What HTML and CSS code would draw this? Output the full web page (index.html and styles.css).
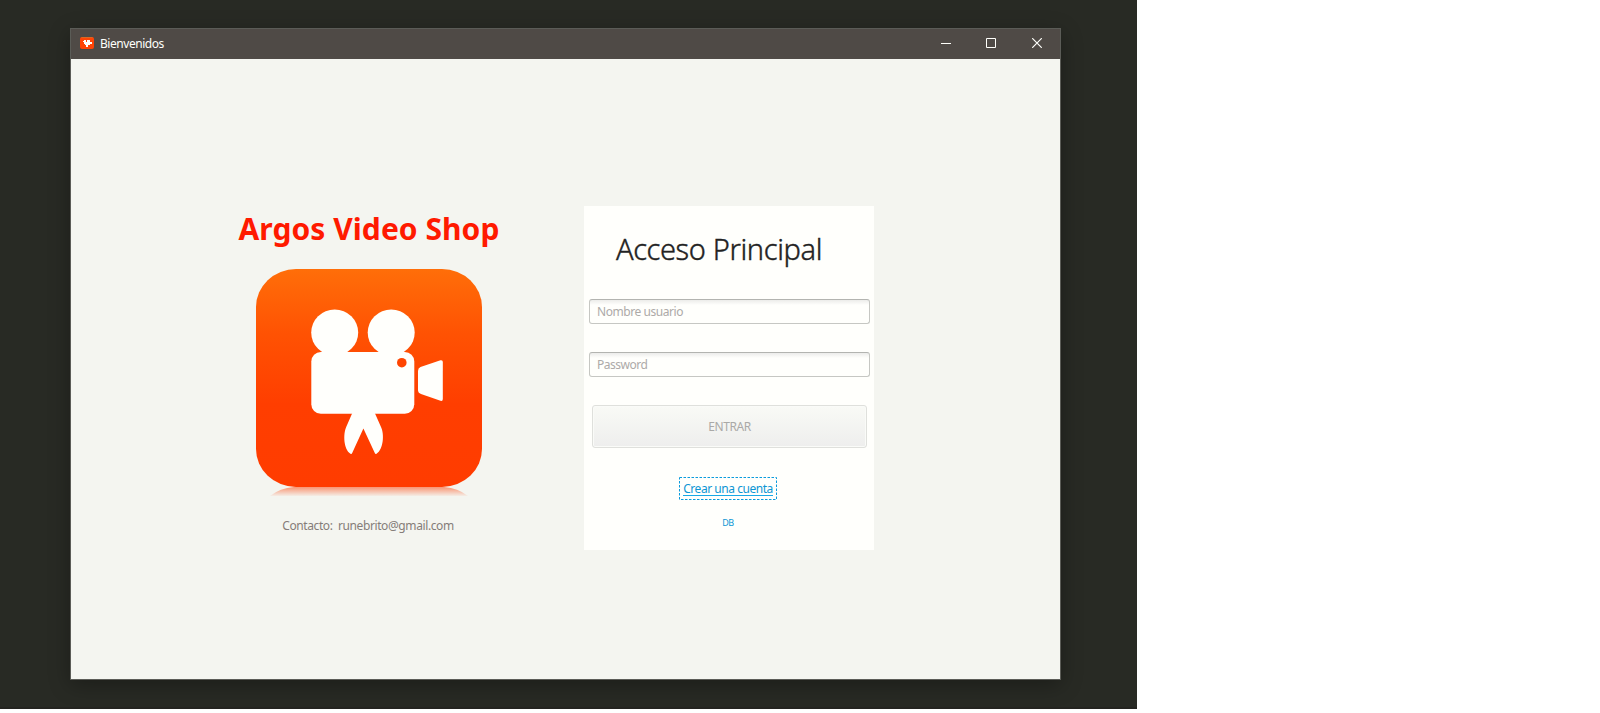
FILE: index.html
```html
<!DOCTYPE html>
<html lang="es">
<head>
<meta charset="utf-8">
<title>Bienvenidos</title>
<link rel="stylesheet" href="styles.css">
</head>
<body>
<div class="desktop">
  <div class="window">
    <header class="titlebar">
      <svg class="app-icon" width="14" height="12" viewBox="0 0 14 12">
        <rect width="14" height="12" rx="2" fill="#ff4406"/>
        <path d="M1.5 .5h11" stroke="#d96822"/>
        <path d="M4 3h2v2h1V3h3v2h2v2h-2v1H8v2H6V8H5V7H4V5H3V4h1z" fill="#fff"/>
      </svg>
      <span class="window-title">Bienvenidos</span>
      <div class="controls">
        <svg width="10" height="10"><path d="M0 5.500h10" stroke="#fffffb"/></svg>
        <svg width="10" height="10"><path d="M.5 .5h9v9h-9z" fill="none" stroke="#fffffb"/></svg>
        <svg class="close" width="10" height="10"><path d="M.2 .2l9.600 9.600M9.800 .2L.2 9.800" stroke="#fffffb" stroke-width="1.2"/></svg>
      </div>
    </header>
    <main class="content">
      <section class="brand">
        <h1 class="brand-title">Argos Video Shop</h1>
        <svg class="logo" width="226" height="228" viewBox="256 269 226 228">
          <defs>
            <linearGradient id="face" x1="0" y1="0" x2="0" y2="1">
              <stop offset="0" stop-color="#ff6e09"/>
              <stop offset=".3" stop-color="#ff5203"/>
              <stop offset=".62" stop-color="#ff3e00"/>
              <stop offset="1" stop-color="#ff3c00"/>
            </linearGradient>
            <linearGradient id="mirror" gradientUnits="userSpaceOnUse" x1="0" y1="487" x2="0" y2="496">
              <stop offset="0" stop-color="#ff3c00" stop-opacity=".52"/>
              <stop offset="1" stop-color="#ff3c00" stop-opacity=".04"/>
            </linearGradient>
          </defs>
          <path d="M294 487H444Q458 488 468 496H270Q280 488 294 487z" fill="url(#mirror)"/>
          <rect x="256" y="269" width="226" height="218" rx="40" ry="38" fill="url(#face)"/>
          <g fill="#fffffc">
            <ellipse cx="334.7" cy="332.6" rx="23.5" ry="23"/>
            <ellipse cx="391.2" cy="332.6" rx="23.5" ry="23"/>
            <rect x="311.3" y="352" width="103" height="61.7" rx="9.5"/>
            <path d="M420.5 367L440.5 360.3Q442.8 359.8 442.8 362V399Q442.8 401.5 440.5 400.8L421 394Q418 392.8 418 390V371Q418 368 420.5 367z"/>
            <path d="M352.3 413L346.2 427C343 434 343.5 449.500 350.500 453.700Q351.600 454.300 352.200 453L363.400 428.500L374.800 453Q375.400 454.300 376.500 453.700C383.500 449.500 384.500 434 381 427L374.800 413z"/>
          </g>
          <circle cx="401.8" cy="362.7" r="4.8" fill="#ff4500"/>
        </svg>
        <p class="contact">Contacto:&nbsp; runebrito@gmail.com</p>
      </section>
      <form class="card">
        <h2 class="card-title">Acceso Principal</h2>
        <input class="field" type="text" placeholder="Nombre usuario">
        <input class="field" type="password" placeholder="Password">
        <button class="submit" type="button" disabled>ENTRAR</button>
        <a class="link-box">
          <svg class="focus-ring" width="98" height="23"><rect x=".5" y=".5" width="97" height="22"/></svg>
          <span class="link-text">Crear una cuenta</span>
        </a>
        <a class="db">DB</a>
      </form>
    </main>
  </div>
</div>
</body>
</html>
```

FILE: styles.css
```css
* { box-sizing: border-box; }
body {
  margin: 0;
  background: #fff;
  font-family: "Noto Sans", "Open Sans", sans-serif;
  font-size: 12px;
}
h1, h2, p { margin: 0; font-weight: 400; }
.desktop {
  width: 1137px;
  height: 709px;
  padding: 28px 0 0 70px;
  background: #282a24;
  border-bottom: 2px solid #242420;
  overflow: hidden;
}
.window {
  width: 991px;
  height: 652px;
  border: 1px solid #5b5c57;
  background: #f4f5f0;
  box-shadow: 0 5px 20px rgba(0, 0, 0, .3);
}
.titlebar {
  display: flex;
  align-items: center;
  height: 30px;
  padding: 0 18px 0 9px;
  background: #4f4a46;
  color: #fffffb;
}
.app-icon { margin: -2px 6px 0 0; }
.window-title { font-size: 12px; line-height: 16px; letter-spacing: -.45px; }
.controls { display: flex; gap: 35px; margin: -2px 0 0 auto; }
.controls svg { display: block; }
.controls .close { margin-left: 1px; }
.content { display: flex; gap: 80px; padding: 147px 0 0 163px; }
.brand { display: flex; flex-direction: column; align-items: center; width: 270px; }
.brand-title {
  height: 63px;
  font-size: 30px;
  line-height: 46px;
  font-weight: 700;
  letter-spacing: .05px;
  color: #ff1a00;
  white-space: nowrap;
}
.logo { display: block; flex: none; }
.contact { margin: 20px 2px 0 0; line-height: 18px; font-size: 12px; letter-spacing: -.4px; color: #857d79; white-space: nowrap; }
.card {
  display: flex;
  flex-direction: column;
  align-items: center;
  width: 290px;
  height: 344px;
  background: #fffffc;
}
.card-title {
  height: 93px;
  padding: 22px 20px 0 0;
  font-size: 29px;
  line-height: 42px;
  font-weight: 300;
  letter-spacing: -.38px;
  -webkit-text-stroke: .4px #222;
  color: #222;
  white-space: nowrap;
}
.field {
  width: 281px;
  height: 25px;
  margin: 0 0 28px 1px;
  padding: 0 7px;
  border: 1px solid #c6c7c3;
  border-top-color: #b3b4b0;
  border-radius: 3px;
  background: linear-gradient(#ececea, #fffffc 5px);
  font: 12px "Noto Sans", "Open Sans", sans-serif;
  letter-spacing: -.44px;
}
.field[type="password"] { letter-spacing: -.5px; }
.field::placeholder { color: #adaaa8; opacity: 1; }
.submit {
  width: 275px;
  height: 43px;
  margin-left: 1px;
  padding: 0;
  border: 1px solid #dfe0dc;
  border-radius: 3px;
  background: linear-gradient(#f9faf6, #eeeeed);
  box-shadow: inset 0 0 0 1px #fafbf8;
  font: 12px "Noto Sans", "Open Sans", sans-serif;
  letter-spacing: -.4px;
  color: #aaa9a7;
}
.link-box { display: grid; place-items: center; width: 98px; height: 23px; margin: 29px 2px 0 0; }
.focus-ring, .link-text { grid-area: 1 / 1; }
.focus-ring rect { fill: none; stroke: #0b9bdd; stroke-dasharray: 2.500 1.500; }
.link-text { border-bottom: 1px solid #18a8e6; line-height: 13px; letter-spacing: -.46px; color: #0e96d4; white-space: nowrap; }
.db { margin: 15px 2px 0 0; font-size: 9px; line-height: 16px; letter-spacing: -.5px; color: #0e96d4; }
```
